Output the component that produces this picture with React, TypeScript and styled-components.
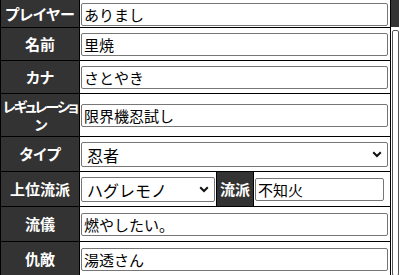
import React from 'react';
import styled, { createGlobalStyle } from 'styled-components';

const GlobalStyle = createGlobalStyle`
  body {
    margin: 0;
    background: #fff;
    font-family: "Noto Sans CJK JP", sans-serif;
  }
`;

const Page = styled.div`
  display: flex;
  align-items: flex-start;
  margin-top: -1px;
`;

const Sheet = styled.table`
  flex: none;
  width: 391px;
  border-collapse: collapse;
  table-layout: fixed;
`;

const Row = styled.tr<{ h: number }>`
  height: ${({ h }) => h}px;
`;

const Head = styled.th<{ squeeze?: boolean }>`
  background: #333;
  color: #fff;
  font-size: ${({ squeeze }) => (squeeze ? '14px' : '15px')};
  font-weight: bold;
  line-height: 18px;
  font-feature-settings: "palt";
  letter-spacing: ${({ squeeze }) => (squeeze ? '-2px' : '0')};
  line-break: anywhere;
  text-align: center;
  border: 1px solid #000;
  padding: 0 ${({ squeeze }) => (squeeze ? '0' : '2px')};
`;

const Cell = styled.td<{ padRight?: number; align?: string }>`
  border: 1px solid #000;
  padding: 0 ${({ padRight = 2 }) => padRight}px 0 1px;
  vertical-align: ${({ align = 'middle' }) => align};
`;

const TextInput = styled.input`
  display: block;
  box-sizing: border-box;
  width: 100%;
  height: 23px;
  margin: 0;
  padding: 0 2px;
  border: 1px solid #767676;
  border-radius: 2px;
  font-family: "Noto Sans CJK JP", sans-serif;
  font-size: 15px;
  color: #000;
  background: #fff;
`;

const SelectWrap = styled.div`
  position: relative;
`;

const Select = styled.select`
  display: block;
  box-sizing: border-box;
  width: 100%;
  height: 25px;
  margin: 0;
  padding: 0 20px 0 5px;
  appearance: none;
  border: 1px solid #767676;
  border-radius: 2px;
  font-family: "Noto Sans CJK JP", sans-serif;
  font-size: 16px;
  color: #000;
  background: #fff;
`;

const Chevron = styled.svg`
  position: absolute;
  right: 6px;
  top: 50%;
  width: 10px;
  height: 7px;
  margin-top: -3px;
  pointer-events: none;
`;

const Side = styled.div`
  flex: 1;
  display: flex;
  flex-direction: column;
  gap: 3px;
`;

const SideHead = styled.div`
  height: 28px;
  background: #333;
`;

const SideBox = styled.div`
  height: 244px;
  margin-left: 1px;
  border: 1px solid #555;
  border-radius: 2px;
`;

const fields: { label: string; value: string; h: number }[] = [
  { label: '名前', value: '里焼', h: 33 },
  { label: 'カナ', value: 'さとやき', h: 33 },
  { label: 'レギュレーション', value: '限界機忍試し', h: 43 },
];

const Dropdown: React.FC<{ value: string; options: string[] }> = ({ value, options }) => (
  <SelectWrap>
    <Select defaultValue={value}>
      {options.map(o => (
        <option key={o}>{o}</option>
      ))}
    </Select>
    <Chevron viewBox="0 0 10 7">
      <path d="M1.2 1.2 L5 5 L8.8 1.2" fill="none" stroke="#111" strokeWidth="2" />
    </Chevron>
  </SelectWrap>
);

const App: React.FC = () => (
  <>
    <GlobalStyle />
    <Page>
      <Sheet>
        <colgroup>
          <col style={{ width: 79 }} />
          <col style={{ width: 137 }} />
          <col style={{ width: 37 }} />
          <col />
        </colgroup>
        <tbody>
          <Row h={28}>
            <Head>プレイヤー</Head>
            <Cell colSpan={3} align="bottom" style={{ paddingBottom: 1 }}>
              <TextInput defaultValue="ありまし" />
            </Cell>
          </Row>
          {fields.map(({ label, value, h }) => (
            <Row key={label} h={h}>
              <Head squeeze={label.length > 6}>{label}</Head>
              <Cell colSpan={3}>
                <TextInput defaultValue={value} />
              </Cell>
            </Row>
          ))}
          <Row h={35}>
            <Head>タイプ</Head>
            <Cell colSpan={3}>
              <Dropdown value="忍者" options={['忍者', '妖魔', '一般人']} />
            </Cell>
          </Row>
          <Row h={35}>
            <Head>上位流派</Head>
            <Cell padRight={1}>
              <Dropdown
                value="ハグレモノ"
                options={['斜歯忍軍', '鞍馬神流', 'ハグレモノ', '比良坂機関', '私立御斎学園', '隠忍の血統']}
              />
            </Cell>
            <Head>流派</Head>
            <Cell padRight={6}>
              <TextInput defaultValue="不知火" />
            </Cell>
          </Row>
          <Row h={35}>
            <Head>流儀</Head>
            <Cell colSpan={3}>
              <TextInput defaultValue="燃やしたい。" />
            </Cell>
          </Row>
          <Row h={35}>
            <Head>仇敵</Head>
            <Cell colSpan={3}>
              <TextInput defaultValue="湯透さん" />
            </Cell>
          </Row>
        </tbody>
      </Sheet>
      <Side>
        <SideHead />
        <SideBox />
      </Side>
    </Page>
  </>
);

export default App;
